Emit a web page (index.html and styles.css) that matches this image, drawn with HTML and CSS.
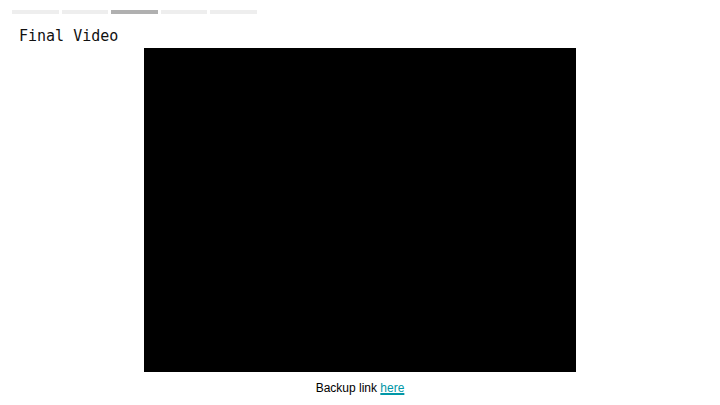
FILE: index.html
```html
<!DOCTYPE html>
<html>
<head>
<meta charset="utf-8">
<link rel="stylesheet" href="styles.css">
</head>
<body>
<div class="page">
  <div class="progress">
    <div class="seg"></div>
    <div class="seg"></div>
    <div class="seg active"></div>
    <div class="seg"></div>
    <div class="seg"></div>
  </div>
  <h1 class="title">Final Video</h1>
  <div class="video"></div>
  <p class="backup">Backup link <a href="#" class="link">here</a></p>
</div>
</body>
</html>
```
FILE: styles.css
```css
html, body {
  margin: 0;
  padding: 0;
  background: #fff;
}
.page {
  width: 720px;
  height: 405px;
  display: flex;
  flex-direction: column;
  font-family: "Liberation Sans", Arial, sans-serif;
}
.progress {
  display: flex;
  gap: 3px;
  padding: 10px 0 0 12px;
}
.seg {
  width: 46.6px;
  height: 4px;
  background: #eeeeee;
}
.seg.active {
  background: #b0b0b0;
}
.title {
  margin: 12px 0 0 19px;
  font-family: "DejaVu Sans Mono", monospace;
  font-weight: normal;
  font-size: 15px;
  line-height: 20px;
  color: #111;
}
.video {
  width: 432px;
  height: 324px;
  background: #000;
  margin: 2px auto 0;
}
.backup {
  margin: 8px 0 0;
  text-align: center;
  font-size: 12px;
  line-height: 16px;
  color: #000;
}
.link {
  color: #0097a7;
  text-decoration-thickness: 2px;
}
```
